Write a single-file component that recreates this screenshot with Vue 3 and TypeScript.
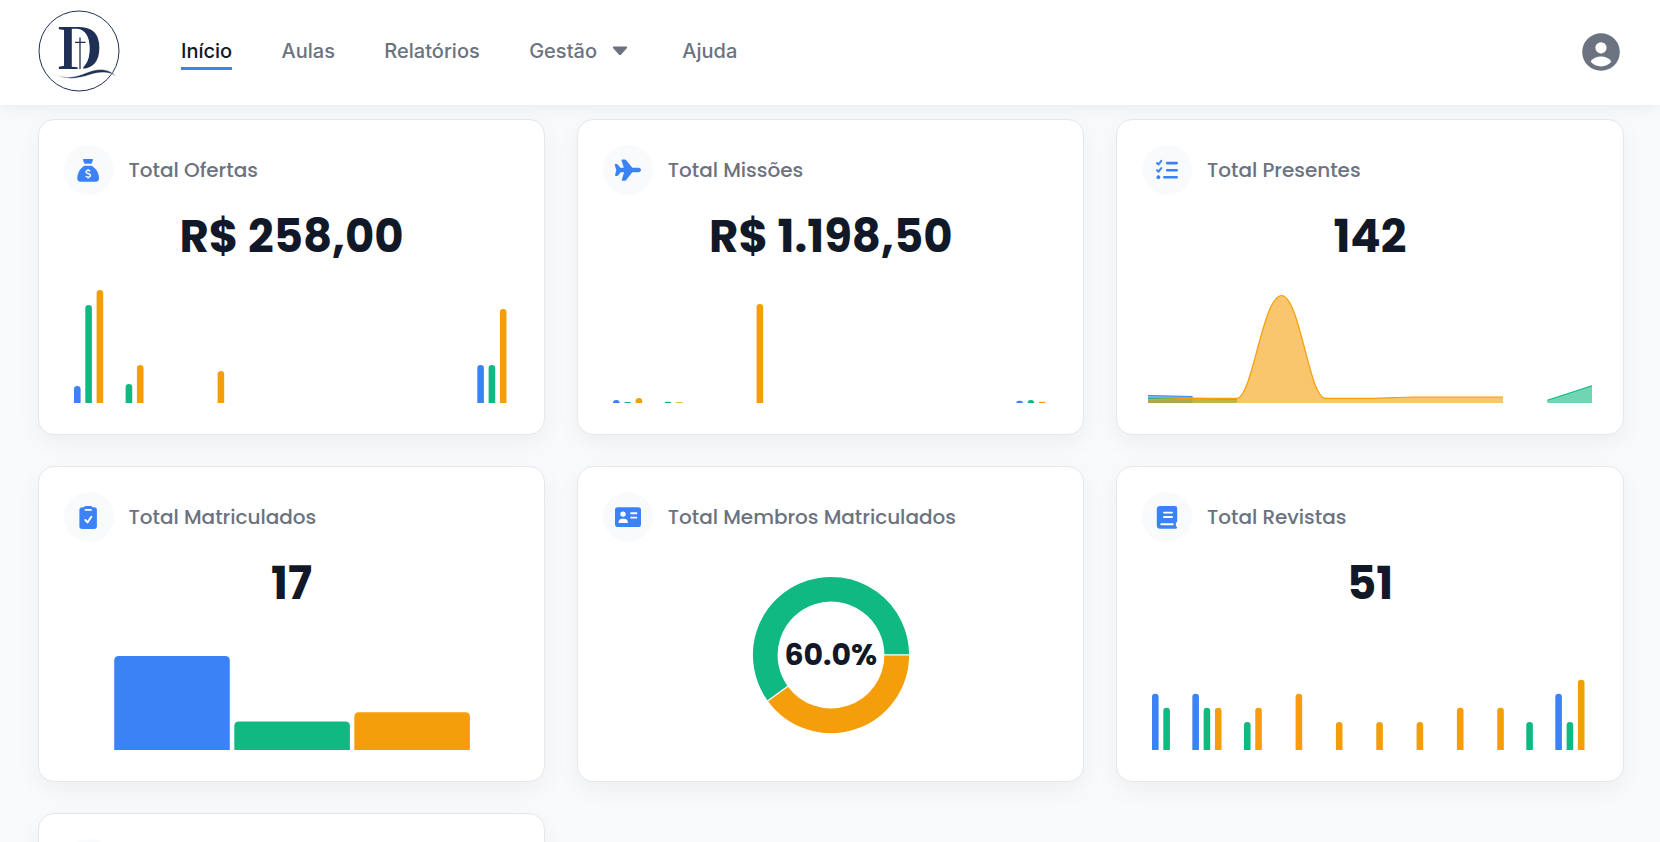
<script setup lang="ts">
type Tone = 'blue' | 'green' | 'amber'
interface Bar { x: number; w: number; h: number; tone: Tone }
interface Card { id: string; title: string; value?: string; bars?: Bar[] }

const BASE = 123
const tones: Tone[] = ['blue', 'green', 'amber']

// Each row is [group, series, height] on an eleven-group axis
function grouped(rows: number[][]): Bar[] {
  return rows.map(([g, s, h]) => ({ x: 10 + g * 40.33 + s * 11.3, w: 6.6, h, tone: tones[s] }))
}

function barPath(b: Bar): string {
  const r = Math.min(b.w / 2, 4.5, b.h)
  const top = BASE - b.h
  return `M${b.x} ${BASE}V${top + r}Q${b.x} ${top} ${b.x + r} ${top}H${b.x + b.w - r}Q${b.x + b.w} ${top} ${b.x + b.w} ${top + r}V${BASE}Z`
}

const nav = [
  { label: 'Início', active: true },
  { label: 'Aulas' },
  { label: 'Relatórios' },
  { label: 'Gestão', menu: true },
  { label: 'Ajuda' },
]

const cards: Card[] = [
  { id: 'ofertas', title: 'Total Ofertas', value: 'R$ 258,00',
    bars: grouped([[0, 0, 17], [0, 1, 98], [0, 2, 113], [1, 1, 19], [1, 2, 38], [3, 2, 32], [10, 0, 38], [10, 1, 38], [10, 2, 94]]) },
  { id: 'missoes', title: 'Total Missões', value: 'R$ 1.198,50',
    bars: grouped([[0, 0, 3], [0, 1, 1], [0, 2, 5], [1, 1, 1.3], [1, 2, 0.7], [3, 2, 99], [10, 0, 2.3], [10, 1, 3], [10, 2, 1.2]]) },
  { id: 'presentes', title: 'Total Presentes', value: '142' },
  { id: 'matriculados', title: 'Total Matriculados', value: '17',
    bars: [
      { x: 50.2, w: 115.6, h: 94, tone: 'blue' },
      { x: 170.3, w: 115.6, h: 28.4, tone: 'green' },
      { x: 290.3, w: 115.6, h: 37.7, tone: 'amber' },
    ] },
  { id: 'membros', title: 'Total Membros Matriculados' },
  { id: 'revistas', title: 'Total Revistas', value: '51',
    bars: grouped([[0, 0, 56.3], [0, 1, 42.2], [1, 0, 56.3], [1, 1, 42.2], [1, 2, 42.2], [2, 1, 28.1], [2, 2, 42.2], [3, 2, 56.3], [4, 2, 28.1], [5, 2, 28.1], [6, 2, 28.1], [7, 2, 42.2], [8, 2, 42.2], [9, 1, 28.1], [10, 0, 56.3], [10, 1, 28.1], [10, 2, 70.3]]) },
  { id: 'extra', title: '' },
]
</script>

<template>
  <div class="page">
    <header class="topbar">
      <svg class="logo" width="84" height="84" viewBox="0 0 84 84">
        <circle cx="42" cy="42" r="40" fill="none" stroke="#1f3057" stroke-width="1" />
        <text x="20.800" y="60" class="logo-letter" textLength="44.600" lengthAdjust="spacingAndGlyphs">D</text>
        <path d="M34.800 19.800H40C48.500 20.300 52.600 28 52.600 39.500C52.600 49 50 54.500 46.300 58.200V61H40.600V58.300L34.800 57.800Z" fill="#fff" />
        <path d="M43 28.500v31.500M38 33.300h10.500" stroke="#1f3057" stroke-width="1.300" fill="none" />
        <path d="M18.800 65.600C31 70.500 40 67.500 50 63.500C61 59 71 59 79.300 67C71 62.500 63 62.700 53 65.800C41 69.800 30 71.500 18.800 65.600Z" fill="#1f3057" stroke="#fff" stroke-width=".5" />
      </svg>
      <nav class="nav">
        <a v-for="item in nav" :key="item.label" class="nav-link" :class="{ active: item.active }">
          <span>{{ item.label }}</span>
          <svg v-if="item.menu" class="caret" width="16" height="10" viewBox="0 0 16 10">
            <path d="M1.700.5h12.600q1.500.3.700 1.500L9.200 8.400q-1.200 1.100-2.400 0L1 2Q.2.800 1.700.5Z" fill="#6b7280" />
          </svg>
        </a>
      </nav>
      <svg class="avatar" width="38" height="38" viewBox="0 0 38 38">
        <circle cx="19" cy="19" r="18.800" fill="#6b7280" />
        <circle cx="19" cy="14.800" r="5.600" fill="#fff" />
        <path d="M8.600 28.500C13 21.700 25 21.700 29.400 28.500C24 35 14 35 8.600 28.500Z" fill="#fff" />
      </svg>
    </header>

    <main class="grid">
      <section v-for="card in cards" :key="card.id" class="card">
        <div class="card-head">
          <span class="badge">
            <svg width="50" height="50" viewBox="0 0 50 50" fill="#3b82f6">
              <g v-if="card.id === 'ofertas'">
                <path d="M19.700 14h8.600q1.100.2.600 1.300l-1.400 3.400h-7l-1.400-3.400q-.5-1.100.6-1.300Z" />
                <path d="M20.300 20.700h7.400C32 23.500 35 28 35 33.300q0 3.400-3.300 3.400H16.600q-3.300 0-3.300-3.400C13.300 28 16 23.500 20.300 20.700Z" />
                <path d="M26.300 26.100C24.500 25 21.900 25.200 21.900 26.900C21.900 29 26.500 28 26.500 30.600C26.500 32.500 23.500 32.600 21.700 31.300M24.100 24v1.500M24.100 32v1.600" fill="none" stroke="#fff" stroke-width="1.400" />
              </g>
              <path v-else-if="card.id === 'missoes'" d="M19.500 14.500h2.200q.8 0 1.300.6l6.300 7.700h6.200C37 22.800 38 23.900 38 25s-1 2.300-2.500 2.300h-6.200L23 35.200q-.5.600-1.300.600h-2.200q-1 0-.700-1l2.300-7.500h-3.400l-2.700 3.200q-.4.500-1 .5h-1.200q-.9 0-.7-.9L13.300 25l-1.500-5.100q-.2-.9.700-.9h1.200q.6 0 1 .5l2.700 3.300h3.400l-2.300-7.300q-.3-1 1-1Z" />
              <g v-else-if="card.id === 'presentes'" fill="none" stroke="#3b82f6" stroke-width="2.600" stroke-linecap="round">
                <path d="M25.200 18.100h9.500M25.200 25.200h9.500M22.300 32.200h12.400" />
                <path d="M15 18l1.500 1.500 2.800-3.700M15 25.200l1.500 1.500 2.800-3.700" stroke-width="2" stroke-linejoin="round" />
                <circle cx="16.400" cy="32.200" r="1.900" fill="#3b82f6" stroke="none" />
              </g>
              <g v-else-if="card.id === 'matriculados'">
                <path d="M18.300 15.200h1.700q.4-1.200 1.700-1.200h5q1.300 0 1.700 1.200h1.700q2.800 0 2.800 2.800v16.200q0 2.700-2.800 2.700H18.100q-2.700 0-2.700-2.700V18q0-2.800 2.900-2.800Z" />
                <path d="M21.600 17.900h5.300" fill="none" stroke="#fff" stroke-width="1.900" stroke-linecap="round" />
                <path d="M21.300 28l2.200 2.400 3.900-5.600" fill="none" stroke="#fff" stroke-width="1.900" stroke-linecap="round" stroke-linejoin="round" />
              </g>
              <g v-else-if="card.id === 'membros'">
                <rect x="12" y="15.200" width="26" height="19.800" rx="2.800" />
                <circle cx="20" cy="22.100" r="2.700" fill="#fff" />
                <path d="M15.500 31q0-4.200 4-4.200h1.400q4 0 4 4.200Z" fill="#fff" />
                <path d="M28.100 21.200h5.300M28.100 25.600h5.300" stroke="#fff" stroke-width="1.900" stroke-linecap="round" />
              </g>
              <g v-else-if="card.id === 'revistas'">
                <path d="M18 14h15q2.200 0 2.200 2.200v12.600q0 1.600-1.300 2.200v3.200q1.300.3 1.300 1.300t-1.300 1.200H18.300q-3.500 0-3.500-3.500V17.500Q14.800 14 18 14Z" />
                <path d="M22 20.600h8M22 25h8M19.200 32.200h11.600" stroke="#fff" stroke-width="1.900" stroke-linecap="round" />
              </g>
            </svg>
          </span>
          <h2 class="title">{{ card.title }}</h2>
        </div>

        <div v-if="card.id === 'membros'" class="donut">
          <svg width="160" height="160" viewBox="-80 -80 160 160">
            <path d="M78.700 0A78.700 78.700 0 1 0-63.670 46.260L-42.720 31.040A52.800 52.800 0 1 1 52.800 0Z" class="slice green" />
            <path d="M78.700 0A78.700 78.700 0 0 1-63.670 46.260L-42.720 31.040A52.800 52.800 0 0 0 52.800 0Z" class="slice amber" />
          </svg>
          <span class="donut-label">60.0%</span>
        </div>
        <template v-else>
          <div class="value">{{ card.value }}</div>
          <svg class="chart" width="455" height="128" viewBox="0 0 455 128">
            <path v-for="(b, i) in card.bars" :key="i" :d="barPath(b)" :class="b.tone" />
            <g v-if="card.id === 'presentes'">
              <path d="M6 115.500L50.500 116.500V123H6Z" class="blue area" />
              <path d="M6 115.500L50.500 116.500" class="line blue-line" />
              <path d="M6 118.300H50.500L95 119.200V123H6Z" class="green area" />
              <path d="M6 118.300H50.500L95 119.200" class="line green-line" />
              <path d="M405.300 120.300L450 105.800V123H405.300Z" class="green area" />
              <path d="M405.300 120.300L450 105.800" class="line green-line" />
              <path d="M6 119.600L50.500 118.400H95C110 118.400 121 15.500 139.400 15.500C158 15.500 167 118.400 183.500 118.400H228C245 118.400 257 117 272.500 117H361V123H6Z" class="amber area" />
              <path d="M6 119.600L50.500 118.400H95C110 118.400 121 15.500 139.400 15.500C158 15.500 167 118.400 183.500 118.400H228C245 118.400 257 117 272.500 117H361" class="line amber-line" />
            </g>
          </svg>
        </template>
      </section>
    </main>
  </div>
</template>

<style>
html, body { margin: 0; background: #f9fafc; }
body { overflow: hidden; }
</style>

<style scoped>
.page {
  height: 842px;
  overflow: hidden;
  background: #f9fafc;
  font-family: Inter, "Liberation Sans", sans-serif;
}
.topbar {
  position: relative;
  z-index: 2;
  display: flex;
  align-items: center;
  box-sizing: border-box;
  height: 105px;
  padding: 0 40.500px 0 36.500px;
  background: #fff;
  box-shadow: 0 4px 16px rgba(0, 0, 0, 0.06);
}
.logo { margin-top: -2.500px; }
.logo-letter { font: bold 64px "Liberation Serif", serif; fill: #1f3057; }
.nav { display: flex; gap: 49.400px; margin-left: 60.500px; }
.nav-link {
  display: flex;
  align-items: center;
  box-sizing: border-box;
  height: 35px;
  font-size: 20px;
  font-weight: 500;
  color: #6b7280;
  border-bottom: 3px solid transparent;
}
.nav-link.active { color: #111827; border-bottom-color: #3b82f6; }
.caret { margin-left: 15px; margin-right: 5px; }
.avatar { margin-left: auto; margin-top: -1.500px; }

.grid {
  display: grid;
  grid-template-columns: repeat(3, 1fr);
  grid-auto-rows: 316px;
  gap: 31px 32px;
  padding: 14px 36.400px 0 38px;
}
.card {
  box-sizing: border-box;
  padding: 25px;
  background: #fff;
  border: 1px solid #e5e7eb;
  border-radius: 16px;
  box-shadow: 0 8px 24px rgba(0, 0, 0, 0.05);
}
.card-head { display: flex; align-items: center; height: 50px; }
.badge { width: 50px; height: 50px; border-radius: 50%; background: #f9fafc; }
.badge svg { display: block; }
.title {
  margin: 0 0 0 14.600px;
  font-family: Poppins, Inter, sans-serif;
  font-size: 20px;
  font-weight: 500;
  letter-spacing: -0.02px;
  color: #6b7280;
  white-space: nowrap;
}
.value {
  display: flex;
  align-items: center;
  justify-content: center;
  box-sizing: border-box;
  height: 85px;
  padding-bottom: 2px;
  font-family: Poppins, Inter, sans-serif;
  font-size: 45px;
  font-weight: 700;
  color: #111827;
}
.chart { display: block; }
.blue { fill: #3b82f6; }
.green { fill: #10b981; }
.amber { fill: #f59e0b; }
.area { fill-opacity: 0.6; }
.line { fill: none; stroke-width: 1.200; }
.blue-line { stroke: #3b82f6; }
.green-line { stroke: #10b981; }
.amber-line { stroke: #f59e0b; }
.donut { display: grid; place-items: center; margin-top: 32.700px; }
.donut > * { grid-area: 1 / 1; }
.slice { stroke: #fff; stroke-width: 1.200; }
.donut-label {
  font-family: Poppins, Inter, sans-serif;
  font-size: 30px;
  font-weight: 700;
  color: #111827;
}
</style>
